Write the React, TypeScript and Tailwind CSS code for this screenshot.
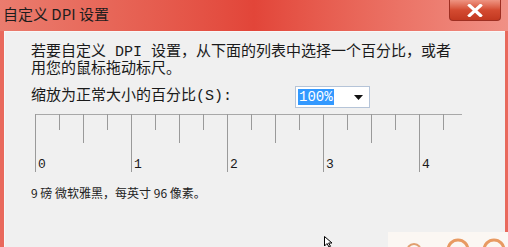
import React from 'react';

const cjk = { fontFamily: '"Noto Sans CJK SC", sans-serif' };
const body = { fontFamily: '"Liberation Mono", "Noto Sans CJK SC", monospace' };

const Ruler = () => {
  const majors = [0, 1, 2, 3, 4];
  const ticks: { x: number; h: number }[] = [];
  for (let i = 0; i <= 17; i++) {
    const x = 5 + i * 24;
    if (x > 430) break;
    if (i % 4 === 0) ticks.push({ x, h: 58 });
    else if (i % 2 === 0) ticks.push({ x, h: 29 });
    else ticks.push({ x, h: 16 });
  }
  return (
    <svg width="440" height="62" className="block">
      <line x1="5" y1="0.5" x2="432" y2="0.5" stroke="#a8a8a8" strokeWidth="1" />
      {ticks.map((t) => (
        <line key={t.x} x1={t.x + 0.5} y1="0" x2={t.x + 0.5} y2={t.h} stroke="#9a9a9a" strokeWidth="1" />
      ))}
      {majors.map((m) => (
        <text
          key={m}
          x={8 + m * 96}
          y="54"
          fontSize="13"
          fill="#1a1a1a"
          style={{ fontFamily: '"Liberation Mono", monospace' }}
        >
          {m}
        </text>
      ))}
    </svg>
  );
};

export default function App() {
  return (
    <div className="relative flex h-[247px] w-[508px] flex-col overflow-hidden bg-[#e9695c]">
      {/* title bar */}
      <div className="flex h-[31px] shrink-0 items-start justify-between bg-gradient-to-r from-[#ea7c6e] via-[#e24539] to-[#f09085]">
        <span className="pl-[3px] pt-[4px] text-[15px] leading-[20px] text-[#1d1d1d]" style={cjk}>
          自定义 DPI 设置
        </span>
        <div className="mr-[7px] flex h-[21px] w-[52px] items-center justify-center rounded-b-[4px] border border-t-0 border-[#9e2f22] bg-gradient-to-b from-[#ee9482] via-[#d44b31] to-[#c23820]">
          <svg width="16" height="13" viewBox="0 0 16 13">
            <path d="M2.5 1.5 L13.5 11.5 M13.5 1.5 L2.5 11.5" stroke="#fff" strokeWidth="3.2" strokeLinecap="square" />
          </svg>
        </div>
      </div>

      {/* body */}
      <div className="flex flex-1 pl-[4px] pr-[3px]">
        <div className="flex flex-1 flex-col border-l border-t border-[#f8f8f8] bg-[#f0f0f0] pl-[26px] text-[#1a1a1a]">
          <p className="mt-[12px] text-[15px] leading-[17px]" style={body}>
            若要自定义 DPI 设置，从下面的列表中选择一个百分比，或者
            <br />
            用您的鼠标拖动标尺。
          </p>

          <div className="mt-[8px] flex items-center">
            <span className="w-[264px] text-[15px] leading-[18px]" style={body}>
              缩放为正常大小的百分比(S):
            </span>
            <div className="flex h-[22px] w-[75px] items-center justify-between border border-[#b5c4d8] bg-white pl-[2px] pr-[6px]">
              <span
                className="bg-[#3399ff] px-[1px] text-[14px] leading-[16px] text-white"
                style={{ fontFamily: '"Liberation Mono", monospace' }}
              >
                100%
              </span>
              <svg width="9" height="5" viewBox="0 0 9 5">
                <path d="M0 0 H9 L4.5 5 Z" fill="#111" />
              </svg>
            </div>
          </div>

          <div className="mt-[6px] ml-[-1px]">
            <Ruler />
          </div>

          <p className="mt-[10px] text-[12px] leading-[14px] text-[#222]" style={cjk}>
            9 磅 微软雅黑，每英寸 96 像素。
          </p>
        </div>
      </div>

      {/* bits of the desktop below the dialog */}
      <div className="absolute bottom-0 left-[388px] h-[15px] w-[120px] overflow-hidden bg-[#fbf7f3]">
        <svg width="120" height="15">
          <path d="M20 15 q6 -6 12 0" stroke="#e0a070" strokeWidth="2" fill="none" />
          <circle cx="70" cy="18" r="10" fill="none" stroke="#e89a62" strokeWidth="3" />
          <circle cx="106" cy="18" r="10" fill="none" stroke="#e89a62" strokeWidth="3" />
        </svg>
      </div>
      <svg className="absolute left-[324px] top-[236px]" width="10" height="11" viewBox="0 0 10 11">
        <path d="M0.5 0.5 L0.5 10 L3 7.5 L5 11 L6.5 10.3 L4.6 7 L8 7 Z" fill="#fff" stroke="#000" strokeWidth="1" />
      </svg>
    </div>
  );
}
